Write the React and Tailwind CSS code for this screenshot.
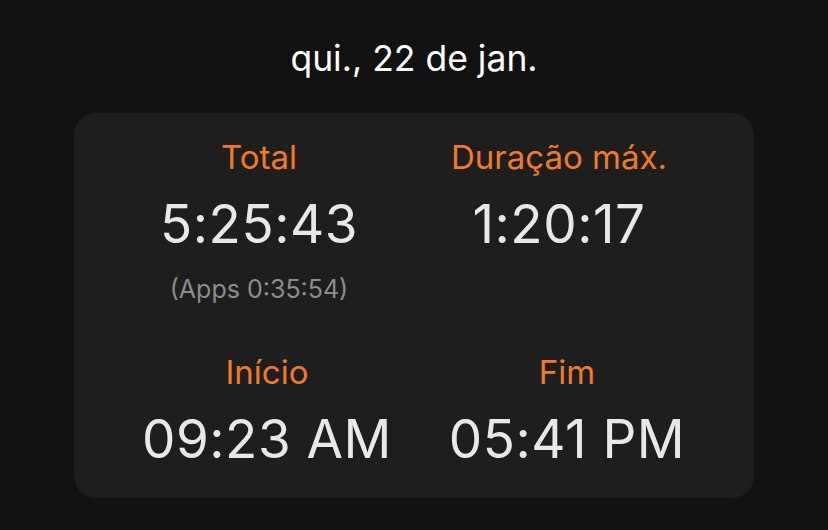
import React from 'react';

function Stat({ label, value, note }) {
  return (
    <div className="flex w-[300px] flex-col items-center">
      <div className="text-[33px] leading-none text-[#f07a2c]">{label}</div>
      <div className="mt-[24px] text-[53px] leading-none tracking-[0.5px] text-[#e8e8e8]">{value}</div>
      {note ? (
        <div className="mt-[26px] text-[25px] leading-none text-[#8c8c8c]">{note}</div>
      ) : null}
    </div>
  );
}

export default function App() {
  return (
    <div
      className="h-[530px] w-[828px] bg-[#121212] pt-[41px]"
      style={{ fontFamily: 'Inter, "Noto Sans", sans-serif' }}
    >
      <div className="text-center text-[35.5px] leading-none text-white">qui., 22 de jan.</div>

      <div className="mx-[74px] mt-[36px] h-[385px] rounded-[22px] bg-[#1e1e1e] pt-[28px]">
        <div className="flex justify-center pr-[10px]">
          <Stat label="Total" value="5:25:43" note="(Apps 0:35:54)" />
          <Stat label="Duração máx." value="1:20:17" />
        </div>

        <div className="mt-[54px] flex justify-center pl-[6px]">
          <Stat label="Início" value="09:23 AM" />
          <Stat label="Fim" value="05:41 PM" />
        </div>
      </div>
    </div>
  );
}
